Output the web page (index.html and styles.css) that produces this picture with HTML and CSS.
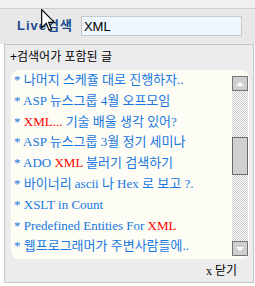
FILE: index.html
```html
<!DOCTYPE html>
<html lang="ko">
<head>
    <meta charset="UTF-8">
    <meta name="viewport" content="width=device-width, initial-scale=1.0">
    <title>Live검색</title>
    <link rel="stylesheet" href="styles.css">
</head>
<body>
    <div class="topline"></div>
    <div class="search-bar">
        <label for="q" class="search-label">Live검색</label>
        <input type="text" id="q" class="search-input" value="XML">
    </div>
    <div class="page"></div>

    <div class="suggest">
        <div class="suggest-title">+검색어가 포함된 글</div>
        <div class="suggest-box">
            <ul class="suggest-list">
                <li>* 나머지 스케쥴 대로 진행하자..</li>
                <li>* ASP 뉴스그룹 4월 오프모임</li>
                <li>* <span class="hit">XML...</span> 기술 배울 생각 있어?</li>
                <li>* ASP 뉴스그룹 3월 정기 세미나</li>
                <li>* ADO <span class="hit">XML</span> 불러기 검색하기</li>
                <li>* 바이너리 ascii 나 Hex 로 보고 ?.</li>
                <li>* XSLT in Count</li>
                <li>* Predefined Entities For <span class="hit">XML</span></li>
                <li>* 웹프로그래머가 주변사람들에..</li>
            </ul>
            <div class="scrollbar">
                <div class="sb-btn up"></div>
                <div class="sb-track"><div class="sb-thumb"></div></div>
                <div class="sb-btn down"></div>
            </div>
        </div>
        <div class="suggest-close">x 닫기</div>
    </div>

    <svg class="cursor" width="14" height="23" viewBox="0 0 12 20">
        <path d="M0.5 0.5 L0.5 16.5 L4.5 12.5 L7 18.5 L9 17.6 L6.6 11.6 L11.5 11.6 Z" fill="#fff" stroke="#000" stroke-width="1"/>
    </svg>
</body>
</html>
```

FILE: styles.css
```css
body {
    margin: 0;
    width: 255px;
    height: 286px;
    overflow: hidden;
    position: relative;
    background-color: #fff;
    font-family: "Liberation Sans", "Noto Sans CJK KR", sans-serif;
}

.topline {
    height: 8px;
    background-color: #f0f0f0;
    border-bottom: 1px solid #cfcfcf;
}

.search-bar {
    height: 35px;
    display: flex;
    align-items: flex-start;
    padding-top: 7px;
    padding-left: 17px;
    box-sizing: border-box;
    background-color: #e8e8e8;
}

.search-label {
    font-size: 13px;
    font-weight: bold;
    letter-spacing: 1px;
    line-height: 20px;
    color: #1b4b8f;
}

.search-input {
    margin: 0 0 0 8px;
    width: 161px;
    height: 20px;
    box-sizing: border-box;
    padding: 0 2px;
    border: 1px solid #c8c8c8;
    background-color: #eef6fe;
    font-family: "Liberation Sans", sans-serif;
    font-size: 13px;
    color: #000;
    outline: none;
}

.page {
    height: 243px;
}

/* dropdown with matching posts */
.suggest {
    position: absolute;
    left: 4px;
    top: 44px;
    width: 250px;
    height: 239px;
    box-sizing: border-box;
    border: 1px solid #c6c6c6;
    background-color: #ececec;
}

.suggest-title {
    height: 25px;
    line-height: 25px;
    padding-left: 5px;
    font-size: 12px;
    color: #000;
}

.suggest-box {
    display: flex;
    margin-left: 6px;
    width: 238px;
    height: 189px;
    border-radius: 8px;
    background-color: #fdfdf6;
}

.suggest-list {
    flex: 1;
    list-style: none;
    margin: 0;
    padding: 0 0 0 3px;
    overflow: hidden;
    white-space: nowrap;
    font-family: "Liberation Serif", "Noto Sans CJK KR", serif;
    font-size: 13px;
    line-height: 20.8px;
    color: #1877e0;
}

.hit {
    color: #f00;
}

.scrollbar {
    width: 16px;
    margin: 6px 1px 3px 0;
    display: flex;
    flex-direction: column;
}

.sb-btn {
    height: 15px;
    box-sizing: border-box;
    border: 1px solid #767676;
    background-color: #cfcfcf;
    display: flex;
    align-items: center;
    justify-content: center;
}

.sb-btn.up::after,
.sb-btn.down::after {
    content: "";
    border-left: 4px solid transparent;
    border-right: 4px solid transparent;
}

.sb-btn.up::after {
    border-bottom: 4px solid #fff;
}

.sb-btn.down::after {
    border-top: 4px solid #fff;
}

.sb-track {
    flex: 1;
    background: repeating-conic-gradient(#cdcdcd 0 25%, #fff 0 50%) 0 0 / 2px 2px;
}

.sb-thumb {
    margin-top: 46px;
    height: 38px;
    box-sizing: border-box;
    border: 1px solid #6a6a6a;
    background-color: #d0d0d0;
}

.suggest-close {
    text-align: right;
    padding-right: 16px;
    line-height: 24px;
    font-family: "Liberation Serif", "Noto Sans CJK KR", serif;
    font-size: 12px;
    color: #000;
}

.cursor {
    position: absolute;
    left: 41px;
    top: 9px;
}
```
